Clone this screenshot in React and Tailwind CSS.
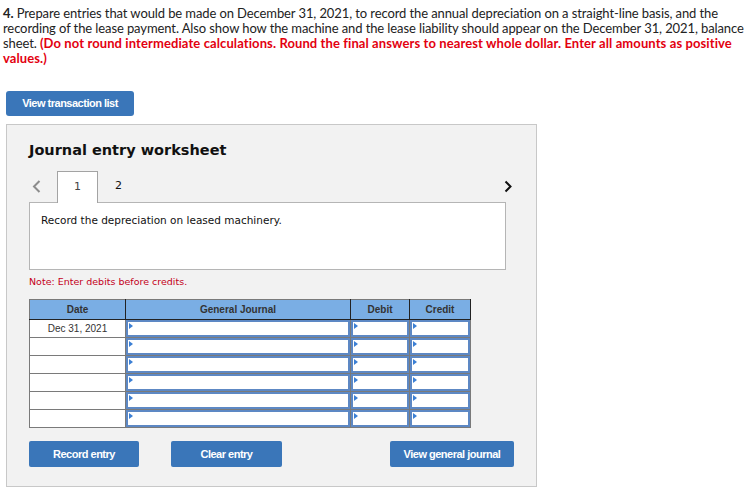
import React from "react";

function Flag() {
  return (
    <span className="absolute left-[1px] top-[1px] w-0 h-0 border-t-[3px] border-b-[3px] border-l-[4px] border-t-transparent border-b-transparent border-l-[#3b7fd4]" />
  );
}

function InputCell() {
  return (
    <td className="p-0 border border-[#7a7a7a] h-[18px]">
      <div className="relative h-[17px] bg-white border-2 border-[#5d88c4]">
        <Flag />
      </div>
    </td>
  );
}

export default function App() {
  const rows = ["Dec 31, 2021", "", "", "", "", ""];
  return (
    <div className="w-[749px] h-[492px] bg-white overflow-hidden relative">
      <p
        className="pl-[3px] pt-[6px] text-[13px] leading-[15px] text-[#222] whitespace-nowrap tracking-[-0.1px]"
        style={{ fontFamily: "Lato, 'Liberation Sans', sans-serif" }}
      >
        <b>4.</b> Prepare entries that would be made on December 31, 2021, to record the annual depreciation on a straight-line basis, and the
        <br />
        recording of the lease payment. Also show how the machine and the lease liability should appear on the December 31, 2021, balance
        <br />
        sheet.{" "}
        <span className="font-bold text-[#e3000f] tracking-[0.1px]">
          (Do not round intermediate calculations. Round the final answers to nearest whole dollar. Enter all amounts as positive
          <br />
          values.)
        </span>
      </p>

      <div
        className="ml-[6px] mt-[25px] w-[128px] h-[25px] rounded-[3px] bg-[#3a76b9] text-white font-bold text-[11px] tracking-[-0.5px] flex items-center justify-center"
        style={{ fontFamily: "'Liberation Sans', Arial, sans-serif" }}
      >
        View transaction list
      </div>

      <div className="ml-[6px] mt-[8px] w-[531px] h-[363px] bg-[#f2f2f2] border border-[#c8c8c8] pl-[22px] pt-[15px]">
        <h2
          className="text-[14.5px] font-bold text-[#111] leading-[20px]"
          style={{ fontFamily: "'DejaVu Sans', Verdana, sans-serif" }}
        >
          Journal entry worksheet
        </h2>

        <div className="mt-[10px] flex items-end w-[483px] h-[32px] relative z-10">
          <div className="w-[28px] h-[32px] flex items-center pl-[3px]">
            <svg width="9" height="13" viewBox="0 0 9 13">
              <polyline points="7.5,1 2,6.5 7.5,12" fill="none" stroke="#8c8c8c" strokeWidth="2" />
            </svg>
          </div>
          <div
            className="w-[41px] h-[32px] bg-white border border-b-0 border-[#a3a3a3] flex items-center justify-center text-[11px] text-[#444] mb-[-1px]"
            style={{ fontFamily: "'DejaVu Sans', Verdana, sans-serif" }}
          >
            1
          </div>
          <div
            className="w-[41px] h-[32px] flex items-center justify-center text-[11px] text-[#111]"
            style={{ fontFamily: "'DejaVu Sans', Verdana, sans-serif" }}
          >
            2
          </div>
          <div className="flex-1" />
          <div className="h-[32px] flex items-center">
            <svg width="8" height="13" viewBox="0 0 8 13">
              <polyline points="1.5,1.5 6.5,6.5 1.5,11.5" fill="none" stroke="#111" strokeWidth="2" />
            </svg>
          </div>
        </div>

        <div
          className="w-[477px] h-[68px] bg-white border border-[#b5b5b5] pl-[11px] pt-[10px] text-[10.5px] text-[#111]"
          style={{ fontFamily: "'DejaVu Sans', Verdana, sans-serif" }}
        >
          Record the depreciation on leased machinery.
        </div>

        <div
          className="mt-[6px] text-[9.5px] leading-[12px] text-[#c4001a]"
          style={{ fontFamily: "'DejaVu Sans', Verdana, sans-serif" }}
        >
          Note: Enter debits before credits.
        </div>

        <table
          className="mt-[11px] border-collapse table-fixed w-[441px] text-[10px] text-[#333]"
          style={{ fontFamily: "'Liberation Sans', Arial, sans-serif" }}
        >
          <colgroup>
            <col className="w-[96px]" />
            <col className="w-[225px]" />
            <col className="w-[59px]" />
            <col className="w-[61px]" />
          </colgroup>
          <thead>
            <tr className="h-[20px] bg-[#7aaee4]">
              <th className="font-bold border border-t-[#7a7a7a] border-l-[#7a7a7a] border-r-[#222] border-b-[#222] p-0">Date</th>
              <th className="font-bold border border-t-[#7a7a7a] border-r-[#222] border-b-[#222] p-0">General Journal</th>
              <th className="font-bold border border-t-[#7a7a7a] border-r-[#222] border-b-[#222] p-0">Debit</th>
              <th className="font-bold border border-t-[#7a7a7a] border-r-[#222] border-b-[#222] p-0">Credit</th>
            </tr>
          </thead>
          <tbody>
            {rows.map((d, i) => (
              <tr key={i} className="h-[18px]">
                <td className="p-0 border border-[#7a7a7a] bg-white text-center">{d}</td>
                <InputCell />
                <InputCell />
                <InputCell />
              </tr>
            ))}
          </tbody>
        </table>

        <div
          className="mt-[13px] flex w-[485px] text-white font-bold text-[11px] tracking-[-0.5px]"
          style={{ fontFamily: "'Liberation Sans', Arial, sans-serif" }}
        >
          <div className="w-[110px] h-[26px] rounded-[2px] bg-[#3a76b9] flex items-center justify-center">Record entry</div>
          <div className="ml-[32px] w-[111px] h-[26px] rounded-[2px] bg-[#3a76b9] flex items-center justify-center">Clear entry</div>
          <div className="ml-[108px] w-[124px] h-[26px] rounded-[2px] bg-[#3a76b9] flex items-center justify-center">View general journal</div>
        </div>
      </div>
    </div>
  );
}
